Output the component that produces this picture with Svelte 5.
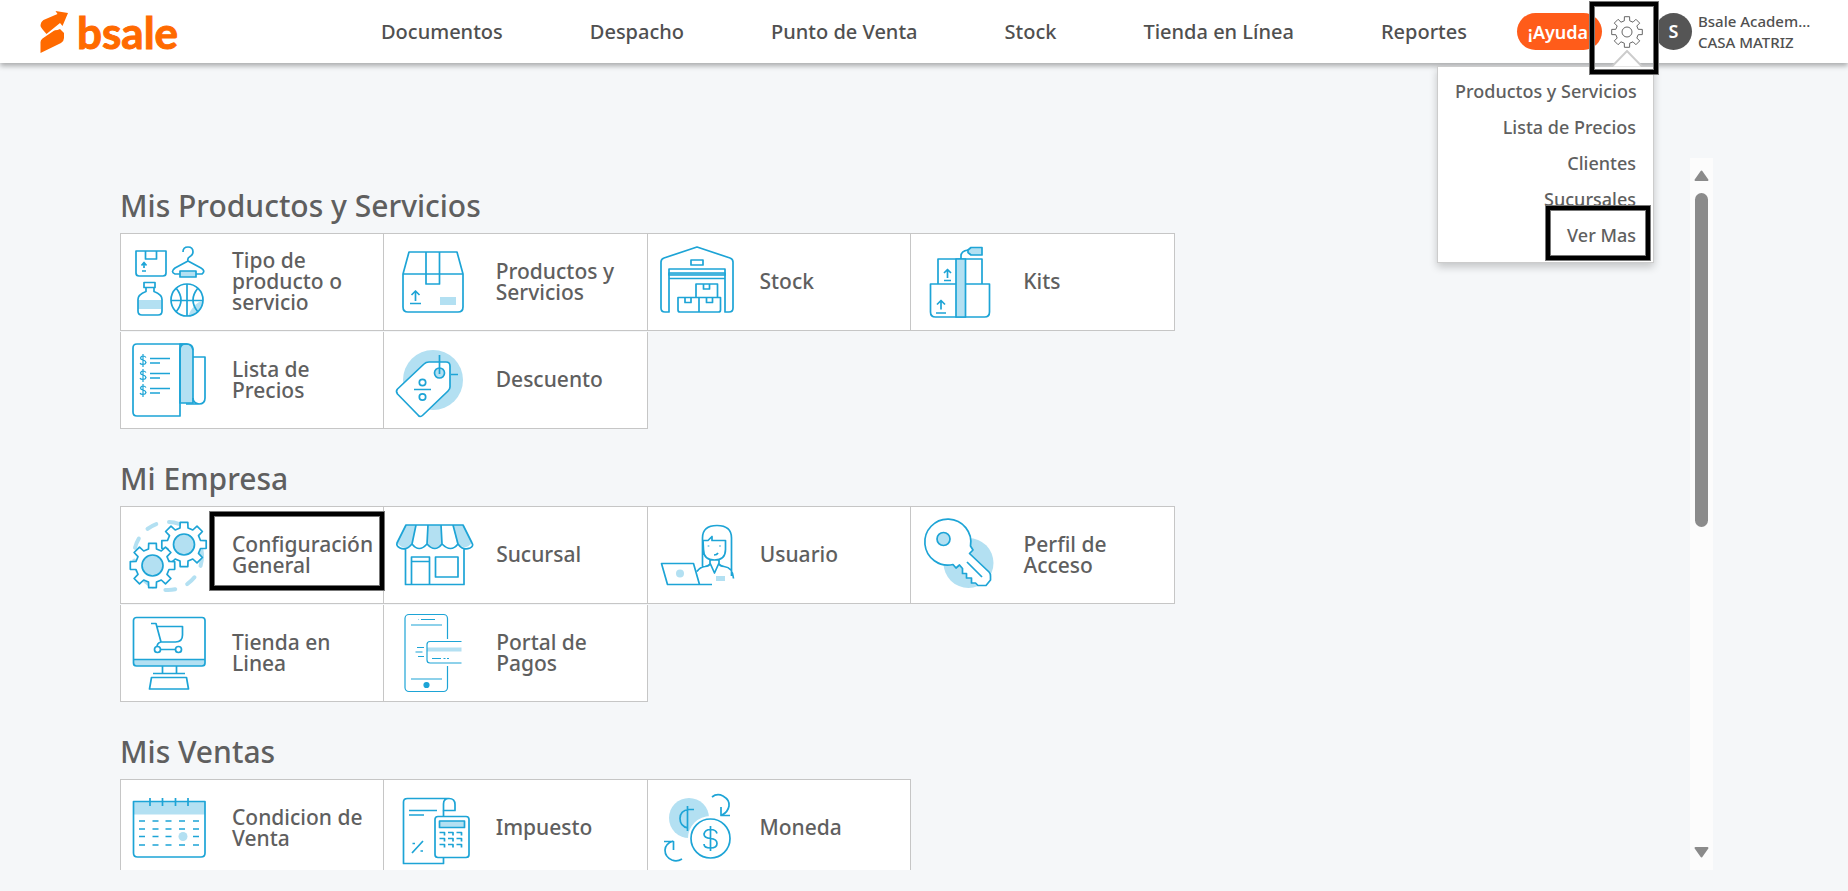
<script>
  const menu = ['Documentos', 'Despacho', 'Punto de Venta', 'Stock', 'Tienda en Línea', 'Reportes'];
  const ajustes = ['Productos y Servicios', 'Lista de Precios', 'Clientes', 'Sucursales', 'Ver Mas'];

  const secciones = [
    {
      titulo: 'Mis Productos y Servicios',
      items: [
        { icono: 'tipo', texto: 'Tipo de producto o servicio' },
        { icono: 'producto', texto: 'Productos y Servicios' },
        { icono: 'stock', texto: 'Stock' },
        { icono: 'kits', texto: 'Kits' },
        { icono: 'lista', texto: 'Lista de Precios' },
        { icono: 'descuento', texto: 'Descuento' }
      ]
    },
    {
      titulo: 'Mi Empresa',
      items: [
        { icono: 'config', texto: 'Configuración General', destacado: true },
        { icono: 'sucursal', texto: 'Sucursal' },
        { icono: 'usuario', texto: 'Usuario' },
        { icono: 'perfil', texto: 'Perfil de Acceso' },
        { icono: 'tienda', texto: 'Tienda en Linea' },
        { icono: 'portal', texto: 'Portal de Pagos' }
      ]
    },
    {
      titulo: 'Mis Ventas',
      items: [
        { icono: 'condicion', texto: 'Condicion de Venta' },
        { icono: 'impuesto', texto: 'Impuesto' },
        { icono: 'moneda', texto: 'Moneda' }
      ]
    }
  ];

  // Contorno de un engranaje de 8 dientes
  function engranaje(cx, cy, r, fondo) {
    const puntos = [];
    const paso = Math.PI / 4;
    for (let i = 0; i < 8; i++) {
      const a = i * paso - Math.PI / 2;
      for (const [d, radio] of [[-0.24, fondo], [-0.17, r], [0.17, r], [0.24, fondo]]) {
        puntos.push(`${(cx + radio * Math.cos(a + d)).toFixed(1)} ${(cy + radio * Math.sin(a + d)).toFixed(1)}`);
      }
    }
    return 'M' + puntos.join('L') + 'Z';
  }
</script>

{#snippet icono(nombre)}
  <svg class="icono" viewBox="0 0 88 84" aria-hidden="true">
    {#if nombre === 'tipo'}
      <path d="M12 11h30v22q0 3-3 3H15q-3 0-3-3zM21.500 11v8h11v-8M20 28v-5M17.500 25.500l2.500-3 2.500 3M18 31h4" />
      <path d="M59 12q0-5 5-5t5 5q0 3-3 4.500t-2 4.500M64 21l-13 7q-5 4 0 6h27q4-3-1-6z" />
      <rect class="claro borde" x="56" y="31" width="16" height="6" />
      <rect class="claro" x="14" y="60" width="23" height="9" />
      <path d="M20 42.500h11v5H20zM22 47.500v4q-8 3-8 8V71q0 4 4 4h16q4 0 4-4V59.500q0-5-8-8v-4" />
      <path class="claro" d="M79 61A16 16 0 0 1 64 76Q70 62 79 61z" />
      <circle cx="63" cy="60" r="16" />
      <path d="M63 44v32M47 60.500h32M52 48q10 12 0 24M74 48q-10 12 0 24" />
    {:else if nombre === 'producto'}
      <path d="M21 12h48l6 22v33q0 5-5 5H20q-5 0-5-5V34zM15 34h60M38 12v32h13.500V12M27.500 61V51M23.500 55l4-4 4 4M22 63.500h11" />
      <rect class="claro" x="52" y="57" width="16" height="8" />
    {:else if nombre === 'lista'}
      <path class="claro borde" d="M56 6h7q6 0 6 6v53H56z" />
      <path d="M56 12v66H13q-4 0-4-4V10q0-4 4-4h50M56 12q0-6 6-6t7 6M69 19h12v41q0 6-6 6H62M69 60q0 5 6 6" />
      {#each [0, 15, 30] as y}
        <path d="M26 {y + 20.5}h20M26 {y + 25}h10" />
        <path class="fino" d="M22 {y + 19.5}q-1-1.500-3-1.500t-2.500 2q0 1.500 2.500 2t3 2.500q-.5 2-3 2t-3-1.500M19 {y + 16}v13" />
      {/each}
    {:else if nombre === 'descuento'}
      <circle class="claro" cx="45" cy="42" r="30" />
      <path class="blanco" d="M41 24h17q4 0 4 4v21q0 2-2 4L35 77q-3 3-5 0L9.500 56q-2-3 0-5L36 26q2-2 5-2z" />
      <circle class="claro borde" cx="51.500" cy="35" r="5" />
      <path d="M51.500 17v19M63 36.500h7M26 51.500h17" />
      <circle cx="34.500" cy="44.500" r="3.200" />
      <circle cx="34.500" cy="59" r="3.200" />
    {:else if nombre === 'stock'}
      <path d="M45 7l33 11q3 1 3 4v46q0 4-4 4h-4V29H17v43h-4q-4 0-4-4V22q0-3 3-4zM39 20h12v5H39zM17 38.500h56" />
      <rect class="claro borde" x="17" y="33" width="56" height="2" />
      <path d="M44 44h21.500v13.500H44zM26 57.500h21V72H28q-2 0-2-2zM47 57.500h21.500V70q0 2-2 2H47zM51.500 44v5h6v-5M33 57.500v5h6v-5M54.500 57.500v5h6v-5" />
    {:else if nombre === 'kits'}
      <path d="M23 19h44v25H23zM15.500 44h59v28q0 5-5 5h-49q-5 0-5-5zM46 19v-3q0-5 7-6" />
      <rect class="claro borde" x="41" y="19" width="9.500" height="58" />
      <path class="claro borde" d="M53 10l3-2.500h11V15H56l-3-2.500z" />
      <path d="M32.500 38v-8M29 33l3.500-3.500L36 33M29 40.500h7M26 69.500v-9M22 64.500l4-4 4 4M21 73h10" />
    {:else if nombre === 'config'}
      <circle class="guiones" cx="44" cy="43" r="34" />
      <path class="blanco" d={engranaje(60, 31.5, 22.5, 17)} />
      <path class="blanco" d={engranaje(28.5, 52.5, 22.5, 17)} />
      <circle class="claro borde" cx="60" cy="31.500" r="10.500" />
      <circle class="claro borde" cx="28.500" cy="52.500" r="10.500" />
    {:else if nombre === 'sucursal'}
      <path class="claro" d="M18 12h10l-4 19q-7 8-15-1zM40 12h13l1 19q-8 8-15 0zM65 12h10l9 18q-7 8-15 1z" />
      <path d="M18 12h57l9 18q2 3-2 5-7 3-12-4-7 9-16 0-7 9-15 0-8 9-15 0-6 7-12 4-4-2-3-5zM28 12l-4 19M40 12l-1 19M53 12l1 19M65 12l5 19M17.500 36v35.500h58.500V36M23.500 71.500V44h18v27.500M23.500 48.500h18M47.500 44H70v20H47.500z" />
    {:else if nombre === 'usuario'}
      <path d="M9.500 50.500h32l6 21H15.500zM47 71.500h13M50.500 54V25q0-12.500 14.500-12.500T79.500 25v38M51 27.500h5l4-4v4h13.500v9q0 10.500-11 10.500T51.500 36.500zM58 46v5q-1 2-5 2.500-5 .500-8 5M67 46v5q1 2 5 2.500 9 1 9.500 12M58 50l4.500 10 4.500-10" />
      <path d="M56.500 32.500v1M68 32.500v1M62 42q3 0 4-2" />
      <circle class="claro" cx="28" cy="60.500" r="4" />
      <rect class="claro" x="64" y="63" width="9" height="5" />
    {:else if nombre === 'perfil'}
      <circle class="claro" cx="53.500" cy="50" r="25" />
      <path class="blanco" d="M55.500 33l2.500 4-3.500 3.500L74 59q1.500 1.500 1.500 4v4L71 72.500h-8L60.500 70h-4v-5h-5v-4.500h-4v-5L44.500 52l-3.500 3-3-3.500A23 23 0 1 1 55.500 33z" />
      <circle class="claro borde" cx="28.500" cy="26" r="6.500" />
      <path d="M52 49l15 15" />
    {:else if nombre === 'tienda'}
      <path class="claro" d="M9.500 48.500H81V52q0 3-3 3H12q-3 0-3-3z" />
      <rect x="9.500" y="6.500" width="71.500" height="48.500" rx="3" />
      <path d="M9.500 48.500H81M38.500 55v7M52.500 55v7M29 62.500h32M27.500 66.500h35l2 11.500h-39zM27 12.500h5l5 18.500q-4 1-4 5M33 15.500h25.500V24q0 7-7 7H37M36 38.500h16" />
      <circle cx="33.500" cy="38.500" r="3" />
      <circle cx="54.500" cy="38.500" r="3" />
    {:else if nombre === 'portal'}
      <g class="fino">
        <rect x="17" y="3.500" width="42.500" height="77" rx="4" />
        <path d="M33 8.500h14M30 8.500h.5M23 14h31M23 68h31" />
        <rect class="fondo" x="37" y="28" width="38" height="27" />
        <path class="claro" d="M39 36.500h34.500v4H39z" />
        <path d="M73.500 30.500H42q-3 0-3 3V49q0 3 3 3h31.500M44 47.500h9M55.500 47.500h2M59 47.500h2M29 36.500h7M27.500 41h7M30 45.500h6" />
        <circle class="punto" cx="38.500" cy="74" r="2.500" />
      </g>
    {:else if nombre === 'condicion'}
      <path class="claro" d="M9.500 15.500H81v13H9.500z" />
      <path d="M9.500 15.500H81V67q0 4-4 4H13.500q-4 0-4-4zM26 12v8M38.500 12v8M51.500 12v8M64 12v8" />
      {#each [35, 43, 50.5, 59] as y}
        <path d="M15 {y}h6M28.500 {y}h6M41.500 {y}h6M55 {y}h6M69 {y}h6" />
      {/each}
      <circle class="claro" cx="59" cy="50.500" r="4.500" />
    {:else if nombre === 'impuesto'}
      <path d="M46.500 77.500h-31V16q0-3.500 4-3.500H61q6 0 6 6v6H55.500V18q0-5.500 5.500-5.500M15.500 77.500h40v-6M21 24.500h28M21 29h15M24 67l11-12" />
      <path d="M24.500 57.500h2.500M32.500 65h2.500M55.500 24.500v6" />
      <rect class="blanco" x="47" y="30.500" width="34" height="41" rx="3" />
      <rect class="claro borde" x="51.500" y="35" width="25" height="6.500" />
      {#each [46.5, 52.5, 58.5] as y}
        <path d="M51.500 {y}h5v3M60 {y}h5v3M68.500 {y}h5v3" />
      {/each}
    {:else if nombre === 'moneda'}
      <circle class="claro" cx="37" cy="32" r="20" />
      <circle class="halo" cx="58.500" cy="52.500" r="21" />
      <circle class="blanco" cx="58.500" cy="52.500" r="19.500" />
      <path d="M42 23.500h-5q-9 1-9 9t8 9.500M35.500 20v25" />
      <path d="M65 47.500q-1-4-6.500-4t-6.500 4.500q0 4 6.500 4.500t6.500 5q0 4.500-6.500 4.500t-6.500-4M58.500 40v25" />
      <path d="M60 11q5-4 11-1 7 4 6 10-1 6-7 9M69 21v8.500h9M30 73q-5 3-10 1-7-3-7-10 0-6 8-9M12 55.500h9.500V64" />
    {/if}
  </svg>
{/snippet}

<div class="pagina">
  <header class="barra">
    <a class="logo" href="#inicio" aria-label="bsale">
      <svg viewBox="0 0 28 42" width="28" height="42" aria-hidden="true">
        <path d="M15.500 0L28 2l-5.500 13-2.500-3L6.500 23Q1 17 .5 15q0-4 3-6L17.500 3zM20 18l4 4v5q0 3-3 5L.5 42V31q0-2 2-3.500L13.500 20q1-1 4-1z" />
      </svg>
      <span>bsale</span>
    </a>
    <nav class="menu">
      {#each menu as opcion}
        <a href="#menu">{opcion}</a>
      {/each}
    </nav>
    <button class="ayuda" type="button">¡Ayuda!</button>
    <div class="ajustes">
      <button class="engranaje" type="button" aria-label="Ajustes">
        <svg viewBox="0 0 32 32" width="32" height="32" aria-hidden="true">
          <path d={engranaje(16, 16, 15.5, 11.5)} />
          <circle cx="16" cy="16" r="5" />
        </svg>
      </button>
      <ul class="desplegable">
        {#each ajustes as opcion}
          <li class:marcado={opcion === 'Ver Mas'}><a href="#ajustes">{opcion}</a></li>
        {/each}
      </ul>
      <svg class="punta" viewBox="0 0 32 17" width="32" height="17" aria-hidden="true">
        <path d="M0 16.500h1L16 1l15 15.500h1" />
      </svg>
      <span class="marco marco-ajustes"></span>
    </div>
    <span class="avatar">S</span>
    <div class="usuario">
      <p>Bsale Academ...</p>
      <p>CASA MATRIZ</p>
    </div>
  </header>

  <main class="panel">
    <div class="contenido">
      {#each secciones as seccion}
        <section>
          <h2>{seccion.titulo}</h2>
          <div class="grilla">
            {#each seccion.items as item, i}
              <a class="celda" class:primera={i % 4 === 0} class:superior={i < 4} href="#opcion">
                {@render icono(item.icono)}
                <span class="texto">{item.texto}</span>
                {#if item.destacado}
                  <span class="marco marco-celda"></span>
                {/if}
              </a>
            {/each}
          </div>
        </section>
      {/each}
    </div>
    <div class="scroll" aria-hidden="true">
      <svg viewBox="0 0 15 11" width="15" height="11"><path d="M7.500 1.500L13.500 10h-12z" /></svg>
      <div class="pista"><div class="pulgar"></div></div>
      <svg viewBox="0 0 15 11" width="15" height="11"><path d="M7.500 9.500L13.500 1h-12z" /></svg>
    </div>
  </main>
</div>

<style>
  :global(body) {
    background: #f5f7f9;
    font-family: "Noto Sans", "Open Sans", sans-serif;
    font-weight: 500;
    color: #5f5f5f;
  }
  .pagina {
    display: flex;
    flex-direction: column;
    height: 100vh;
  }
  a {
    color: inherit;
    text-decoration: none;
  }
  p, h2, ul {
    margin: 0;
    padding: 0;
  }
  .barra {
    display: flex;
    align-items: center;
    flex: none;
    height: 63px;
    padding: 0 36px 0 40px;
    background: #fff;
    box-shadow: 0 3px 5px rgba(0, 0, 0, 0.3);
    box-sizing: border-box;
    color: #505050;
    z-index: 1;
  }
  .logo {
    display: flex;
    align-items: center;
    gap: 9px;
    width: 341px;
    font-family: Lato, sans-serif;
    font-size: 44px;
    line-height: 60px;
    font-weight: 700;
    color: #ff6a00;
    -webkit-text-stroke: 1px #ff6a00;
  }
  .logo svg {
    fill: #ff6a00;
  }
  .menu {
    display: flex;
    flex: 1;
    justify-content: space-between;
    font-size: 20px;
    white-space: nowrap;
  }
  button {
    border: 0;
    padding: 0;
    font: inherit;
    cursor: pointer;
  }
  .ayuda {
    width: 85px;
    height: 37px;
    margin-left: 50px;
    padding-left: 2px;
    border-radius: 19px;
    background: #ff5c1a;
    color: #fff;
    font-size: 18px;
    font-weight: 600;
  }
  .ajustes {
    position: relative;
    margin: 0 12px 0 9px;
  }
  .engranaje {
    display: block;
    width: 32px;
    height: 32px;
    background: none;
  }
  .engranaje svg {
    display: block;
    fill: none;
    stroke: #666;
  }
  .punta {
    position: absolute;
    top: 34px;
    left: 0;
    fill: #fff;
    stroke: #ccc;
    stroke-width: 2;
  }
  .desplegable {
    position: absolute;
    top: 50px;
    right: -11px;
    width: 217px;
    padding: 6px 17px 9px;
    border: 1px solid #ccc;
    background: #fff;
    box-shadow: 0 4px 8px rgba(0, 0, 0, 0.2);
    box-sizing: border-box;
    list-style: none;
    text-align: right;
    font-size: 18px;
    line-height: 36px;
    white-space: nowrap;
    color: #5f5f5f;
  }
  .marcado {
    position: relative;
  }
  .marco,
  .marcado::after {
    position: absolute;
    border: 1px solid #777;
    box-shadow: inset 0 0 0 4px #000, inset 0 0 0 5px #777;
    box-sizing: border-box;
    pointer-events: none;
  }
  .marcado::after {
    content: '';
    inset: -12px -15px -8px auto;
    width: 106px;
  }
  .marco-ajustes {
    top: -15px;
    left: -22px;
    width: 70px;
    height: 74px;
  }
  .marco-celda {
    top: 4px;
    right: -2px;
    bottom: 12px;
    left: 88px;
    z-index: 1;
  }
  .avatar {
    width: 37px;
    height: 37px;
    border-radius: 50%;
    background: #555;
    color: #fff;
    text-align: center;
    font-size: 18px;
    font-weight: 600;
    line-height: 37px;
  }
  .usuario {
    width: 114px;
    margin-left: 6px;
    font-size: 15px;
    line-height: 21px;
    white-space: nowrap;
  }
  .panel {
    display: flex;
    flex: 1;
    min-height: 0;
    margin: 95px 135px 21px 120px;
  }
  .contenido {
    flex: 1;
    overflow-y: auto;
    scrollbar-width: none;
  }
  section {
    padding-top: 26px;
  }
  section + section {
    padding-top: 28px;
  }
  h2 {
    font-size: 30px;
    line-height: 44px;
    font-weight: 500;
    padding-bottom: 5px;
  }
  .grilla {
    display: grid;
    grid-template-columns: repeat(4, 1fr);
    width: 67.2%;
    row-gap: 1px;
  }
  .celda {
    position: relative;
    display: flex;
    align-items: center;
    gap: 20px;
    height: 97px;
    padding: 0 10px 0 4px;
    border-right: 1px solid #c6c6c6;
    border-bottom: 1px solid #c6c6c6;
    background: #fff;
    box-sizing: border-box;
  }
  .primera {
    padding-left: 3px;
    border-left: 1px solid #c6c6c6;
  }
  .superior {
    height: 98px;
    border-top: 1px solid #c6c6c6;
  }
  .texto {
    flex: 1;
    padding-bottom: 1px;
    font-size: 21px;
    line-height: 21px;
  }
  .icono {
    flex: none;
    width: 88px;
    height: 84px;
    fill: none;
    stroke: #1da4d6;
    stroke-width: 1.7;
    stroke-linejoin: round;
  }
  .icono .claro {
    fill: #b3e0f2;
    stroke: none;
  }
  .icono .borde {
    stroke: #1da4d6;
  }
  .icono .blanco {
    fill: #fff;
  }
  .icono .fino {
    stroke-width: 1.2;
  }
  .icono .fondo {
    fill: #fff;
    stroke: none;
  }
  .icono .punto {
    fill: #1da4d6;
  }
  .icono .halo {
    fill: #fff;
    stroke: #fff;
    stroke-width: 3;
  }
  .icono .guiones {
    stroke: #b3e0f2;
    stroke-width: 4;
    stroke-dasharray: 10 13;
    stroke-linecap: round;
  }
  .scroll {
    display: flex;
    flex-direction: column;
    align-items: center;
    width: 23px;
    padding: 12px 0;
    background: #fcfcfc;
    box-sizing: border-box;
  }
  .scroll svg {
    fill: #8b8b8b;
    stroke: #8b8b8b;
    stroke-width: 2;
    stroke-linejoin: round;
  }
  .pista {
    flex: 1;
    width: 13px;
    padding: 12px 0;
  }
  .pulgar {
    height: 52%;
    border-radius: 7px;
    background: #8b8b8b;
  }
</style>
